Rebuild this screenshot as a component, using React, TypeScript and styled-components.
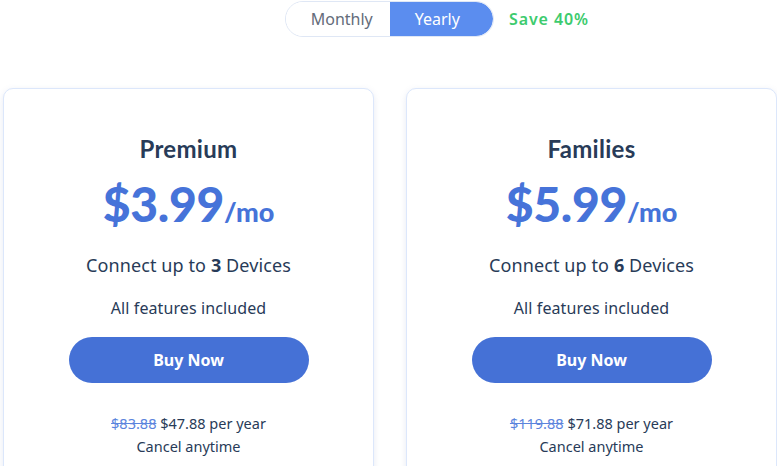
import React from "react";
import styled, { createGlobalStyle } from "styled-components";

const Global = createGlobalStyle`
  html, body { margin: 0; padding: 0; background: #ffffff; }
  body { font-family: "Noto Sans", "Open Sans", sans-serif; overflow: hidden; }
`;

const Page = styled.div`
  width: 777px;
  height: 466px;
  overflow: hidden;
  display: flex;
  flex-direction: column;
`;

const ToggleRow = styled.div`
  display: flex;
  justify-content: center;
  padding-top: 1px;
  padding-left: 2px;
`;

const ToggleWrap = styled.div`
  position: relative;
  display: flex;
`;

const Toggle = styled.div`
  display: flex;
  width: 209px;
  height: 36px;
  border: 1px solid #dfe7f5;
  border-radius: 19px;
  overflow: hidden;
  box-sizing: border-box;
`;

const ToggleOption = styled.div<{ $active?: boolean }>`
  flex: 1;
  display: flex;
  align-items: center;
  justify-content: center;
  font-size: 16px;
  font-family: "Noto Sans", sans-serif;
  color: ${(p) => (p.$active ? "#ffffff" : "#646c7a")};
  background: ${(p) => (p.$active ? "#5b8def" : "#ffffff")};
  border-radius: ${(p) => (p.$active ? "0 18px 18px 0" : "0")};
  padding: ${(p) => (p.$active ? "0 8px 0 0" : "0 0 0 8px")};
`;

const Save = styled.span`
  position: absolute;
  left: 224px;
  top: 7px;
  font-family: "Noto Sans", sans-serif;
  font-weight: 600;
  font-size: 16px;
  color: #3dcb6e;
  white-space: nowrap;
  letter-spacing: 0.9px;
`;

const Cards = styled.div`
  display: flex;
  gap: 32px;
  padding-left: 3px;
  margin-top: 51px;
`;

const Card = styled.div`
  width: 371px;
  height: 400px;
  flex-shrink: 0;
  box-sizing: border-box;
  border: 1px solid #dce7fb;
  border-radius: 10px;
  box-shadow: 0 2px 6px rgba(120, 140, 190, 0.18);
  background: #fff;
  display: flex;
  flex-direction: column;
  align-items: center;
  padding-top: 45px;
`;

const Title = styled.div`
  font-family: "Lato", sans-serif;
  font-weight: 700;
  font-size: 24px;
  color: #283b58;
  line-height: 30px;
  letter-spacing: 0.3px;
`;

const Price = styled.div`
  margin-top: 12px;
  display: flex;
  align-items: baseline;
  color: #4673d9;
  font-family: "Lato", sans-serif;
  font-weight: 900;
  line-height: 56px;
`;

const Amount = styled.span`
  font-size: 48px;
  letter-spacing: -0.3px;
`;

const Per = styled.span`
  font-size: 27px;
  margin-left: 0;
`;

const Devices = styled.div`
  margin-top: 12px;
  font-size: 18px;
  color: #283b58;
  line-height: 26px;
  letter-spacing: 0.1px;
  b { font-weight: 700; }
`;

const Features = styled.div`
  margin-top: 19px;
  font-size: 16px;
  color: #283b58;
  line-height: 22px;
  letter-spacing: 0.1px;
`;

const Buy = styled.button`
  margin-top: 18px;
  width: 240px;
  height: 46px;
  border: none;
  border-radius: 23px;
  background: #4571d6;
  color: #fff;
  font-family: "Noto Sans", sans-serif;
  font-weight: 700;
  font-size: 16px;
  cursor: pointer;
`;

const Yearly = styled.div`
  margin-top: 29px;
  font-size: 14.5px;
  color: #283b58;
  line-height: 23px;
  text-align: center;
  s { color: #5b84dd; }
`;

const plans = [
  { name: "Premium", price: "$3.99", devices: 3, old: "$83.88", now: "$47.88" },
  { name: "Families", price: "$5.99", devices: 6, old: "$119.88", now: "$71.88" },
];

export default function App() {
  return (
    <Page>
      <Global />
      <ToggleRow>
        <ToggleWrap>
          <Toggle>
            <ToggleOption>Monthly</ToggleOption>
            <ToggleOption $active>Yearly</ToggleOption>
          </Toggle>
          <Save>Save 40%</Save>
        </ToggleWrap>
      </ToggleRow>
      <Cards>
        {plans.map((p) => (
          <Card key={p.name}>
            <Title>{p.name}</Title>
            <Price>
              <Amount>{p.price}</Amount>
              <Per>/mo</Per>
            </Price>
            <Devices>
              Connect up to <b>{p.devices}</b> Devices
            </Devices>
            <Features>All features included</Features>
            <Buy>Buy Now</Buy>
            <Yearly>
              <s>{p.old}</s> {p.now} per year
              <br />
              Cancel anytime
            </Yearly>
          </Card>
        ))}
      </Cards>
    </Page>
  );
}
